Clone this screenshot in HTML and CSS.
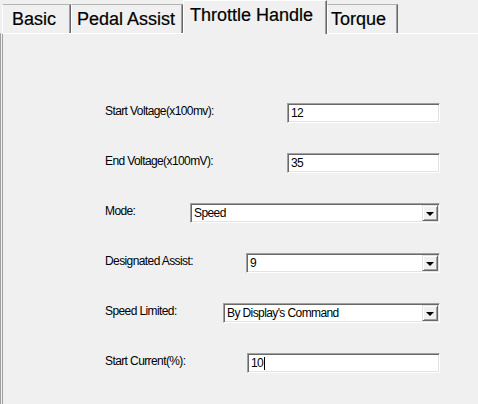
FILE: index.html
```html
<!DOCTYPE html>
<html>
<head>
<meta charset="utf-8">
<link rel="stylesheet" href="styles.css">
</head>
<body>
<div class="tabs">
  <div class="tab tab-basic">Basic</div>
  <div class="tab tab-pedal">Pedal Assist</div>
  <div class="tab tab-throttle selected">Throttle Handle</div>
  <div class="tab tab-torque">Torque</div>
</div>
<div class="panel">
  <div class="form">
    <div class="row">
      <div class="label l-start">Start Voltage(x100mv):</div>
      <div class="field f-start"><span class="value">12</span></div>
    </div>
    <div class="row">
      <div class="label l-start">End Voltage(x100mV):</div>
      <div class="field f-start"><span class="value">35</span></div>
    </div>
    <div class="row">
      <div class="label l-mode">Mode:</div>
      <div class="field combo f-mode"><span class="value">Speed</span><span class="drop"><span class="arrow"></span></span></div>
    </div>
    <div class="row">
      <div class="label l-assist">Designated Assist:</div>
      <div class="field combo f-assist"><span class="value">9</span><span class="drop"><span class="arrow"></span></span></div>
    </div>
    <div class="row">
      <div class="label l-speed">Speed Limited:</div>
      <div class="field combo f-speed"><span class="value">By Display's Command</span><span class="drop"><span class="arrow"></span></span></div>
    </div>
    <div class="row">
      <div class="label l-current">Start Current(%):</div>
      <div class="field f-current"><span class="value">10</span><span class="caret"></span></div>
    </div>
  </div>
</div>
</body>
</html>
```

FILE: styles.css
```css
html, body {
  margin: 0;
  padding: 0;
  background: #f0f0f0;
  font-family: "Liberation Sans", Arial, sans-serif;
  color: #000;
  overflow: hidden;
}

.tabs {
  display: flex;
  align-items: flex-end;
  height: 33px;
  padding-left: 2px;
}

.tab {
  box-sizing: border-box;
  height: 29px;
  font-size: 18px;
  line-height: 20px;
  padding-top: 4px;
  border-top: 1px solid #b4b4b4;
  border-left: 1px solid #ffffff;
  border-right: 1px solid #696969;
  box-shadow: inset -1px 0 0 #a0a0a0;
  background: #f0f0f0;
  white-space: nowrap;
  -webkit-text-stroke: 0.2px #000;
}

.tab-basic { width: 69px; padding-left: 9px; }
.tab-pedal { width: 112px; padding-left: 5px; }
.tab-throttle { width: 144px; padding-left: 6px; }
.tab-torque { width: 71px; padding-left: 3px; }

.tab.selected {
  height: 34px;
  margin-bottom: -1px;
  position: relative;
  z-index: 1;
  border-top: 1px solid #ffffff;
}

.panel {
  border-top: 1px solid #ffffff;
  border-left: 3px double #a0a0a0;
  height: 380px;
}

.form {
  display: flex;
  flex-direction: column;
  gap: 30px;
  padding-top: 69px;
  padding-left: 102px;
}

.row {
  display: flex;
  align-items: flex-start;
  height: 20px;
}

.label {
  font-size: 12px;
  letter-spacing: -0.6px;
  line-height: 14px;
  padding-top: 1px;
  white-space: nowrap;
}

.l-start { width: 182px; }
.l-mode { width: 85px; }
.l-assist { width: 141px; }
.l-speed { width: 118px; }
.l-current { width: 142px; }

.field {
  box-sizing: border-box;
  height: 20px;
  background: #ffffff;
  border: 1px solid;
  border-color: #a0a0a0 #ffffff #ffffff #a0a0a0;
  box-shadow: inset 1px 1px 0 #696969, inset -1px -1px 0 #e3e3e3;
  display: flex;
  align-items: center;
  padding-left: 3px;
  font-size: 12px;
  letter-spacing: -0.6px;
  position: relative;
}

.f-start { width: 153px; }
.f-mode { width: 250px; }
.f-assist { width: 194px; }
.f-speed { width: 217px; }
.f-current { width: 193px; }

.value {
  line-height: 14px;
  white-space: nowrap;
}

.caret {
  display: inline-block;
  width: 1px;
  height: 13px;
  background: #000;
  margin-left: 1px;
}

.combo .value {
  flex: 1;
}

.drop {
  box-sizing: border-box;
  width: 16px;
  height: 16px;
  margin-right: 1px;
  background: #f0f0f0;
  border: 1px solid;
  border-color: #e3e3e3 #696969 #696969 #e3e3e3;
  box-shadow: inset 1px 1px 0 #ffffff, inset -1px -1px 0 #a0a0a0;
  display: flex;
  align-items: center;
  justify-content: center;
}

.arrow {
  width: 0;
  height: 0;
  border-left: 4px solid transparent;
  border-right: 4px solid transparent;
  border-top: 4px solid #000;
  margin-top: 1px;
}
```
